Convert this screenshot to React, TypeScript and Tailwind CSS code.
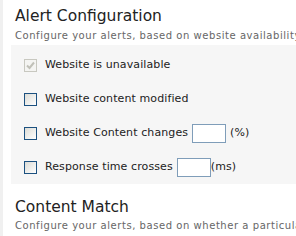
const font = { fontFamily: '"DejaVu Sans", Verdana, sans-serif' };

const Box = ({ disabled }: { disabled?: boolean }) =>
  disabled ? (
    <span className="flex h-[13px] w-[13px] shrink-0 items-center justify-center border border-[#c8c8c0] bg-[#f4f4f2]">
      <svg width="9" height="9" viewBox="0 0 9 9">
        <path d="M1 4.5 L3.5 7 L8 1.5" fill="none" stroke="#c0c0b8" strokeWidth="2" />
      </svg>
    </span>
  ) : (
    <span className="block h-[13px] w-[13px] shrink-0 border border-[#1c5180] bg-gradient-to-br from-[#dcdcd6] to-white" />
  );

const Row = ({ children, disabled }: { children: React.ReactNode; disabled?: boolean }) => (
  <div className="flex h-[20px] items-center gap-[8px]">
    <Box disabled={disabled} />
    <div className="flex items-center text-[11px] tracking-[0.1px] text-[#222]">{children}</div>
  </div>
);

export default function App() {
  return (
    <div className="h-[236px] w-[296px] overflow-hidden border-l-[3px] border-[#f0f0f0] bg-white" style={font}>
      <div className="pl-[12px] pt-[7px]">
        <h2 className="text-[15.5px] leading-[18px] text-[#222]">Alert Configuration</h2>
        <p className="mt-[4px] whitespace-nowrap text-[10px] leading-[13px] tracking-[0.55px] text-[#666]">
          Configure your alerts, based on website availability
        </p>
      </div>
      <div className="ml-[8px] mt-[3px] flex h-[139px] flex-col gap-[14px] bg-[#f6f6f6] pl-[13px] pt-[10px]">
        <Row disabled>Website is unavailable</Row>
        <Row>Website content modified</Row>
        <Row>
          Website Content changes
          <span className="ml-[4px] h-[19px] w-[34px] border border-[#7f9db9] bg-white" />
          <span className="ml-[4px]">(%)</span>
        </Row>
        <Row>
          Response time crosses
          <span className="ml-[4px] h-[19px] w-[34px] border border-[#7f9db9] bg-white" />
          <span>(ms)</span>
        </Row>
      </div>
      <div className="pl-[12px] pt-[14px]">
        <h2 className="text-[15.5px] leading-[18px] text-[#222]">Content Match</h2>
        <p className="mt-[3px] whitespace-nowrap text-[10px] leading-[13px] tracking-[0.55px] text-[#666]">
          Configure your alerts, based on whether a particular
        </p>
      </div>
    </div>
  );
}
